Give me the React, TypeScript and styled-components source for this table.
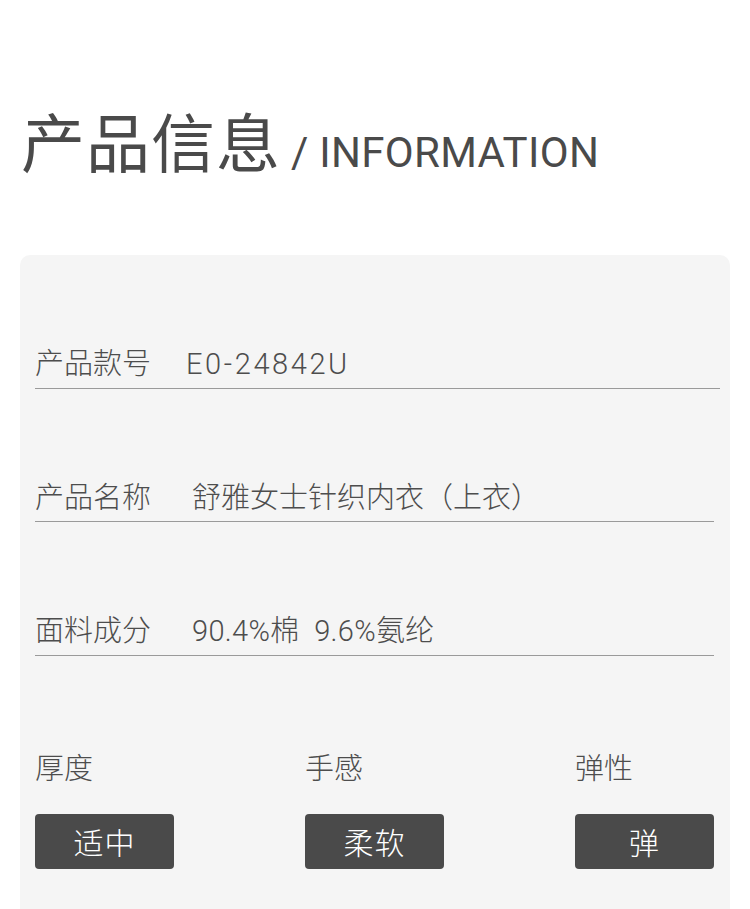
import styled, { createGlobalStyle } from "styled-components";

const GlobalStyle = createGlobalStyle`
  body {
    margin: 0;
    background: #ffffff;
    font-family: "Noto Sans CJK SC", "Noto Sans", sans-serif;
    color: #4d4d4d;
  }
`;

const Page = styled.div`
  width: 750px;
  overflow: hidden;
`;

const Header = styled.h1`
  margin: 0;
  padding: 107px 0 0 21px;
  display: flex;
  align-items: baseline;
  font-weight: 400;
  line-height: 1;
  color: #4a4a4a;
`;

const TitleCn = styled.span`
  font-size: 64px;
  letter-spacing: 1px;
`;

const TitleEn = styled.span`
  margin-left: 10px;
  font-family: Roboto, "Noto Sans", sans-serif;
  font-size: 42px;
  font-weight: 400;
  letter-spacing: 0.3px;
`;

const Card = styled.section`
  margin: 81px 20px 0;
  padding: 0 0 60px 15px;
  background: #f5f5f5;
  border-radius: 10px 10px 0 0;
`;

const Row = styled.div<{ $end: number }>`
  display: flex;
  align-items: baseline;
  margin-right: ${({ $end }) => $end}px;
  padding: 86px 0 6.5px;
  height: 40px;
  border-bottom: 1.5px solid #9a9a9a;
  font-size: 29px;
  font-weight: 300;
  line-height: 40px;
  white-space: nowrap;
`;

const Label = styled.span`
  flex: none;
  width: 118px;
`;

const Value = styled.span<{ $indent: number; $track: number }>`
  margin-left: ${({ $indent }) => $indent}px;
  font-family: Roboto, "Noto Sans CJK SC", sans-serif;
  font-size: 29px;
  font-weight: 300;
  letter-spacing: ${({ $track }) => $track}px;
  white-space: pre;
`;

const Traits = styled.div`
  display: grid;
  grid-template-columns: 270px 270px 1fr;
  padding-top: 90px;
`;

const Trait = styled.div`
  display: flex;
  flex-direction: column;
  gap: 28px;
`;

const TraitName = styled.span`
  font-size: 29px;
  font-weight: 300;
  line-height: 40px;
`;

const Tag = styled.div`
  width: 139px;
  height: 55px;
  border-radius: 4px;
  background: #4a4a4a;
  color: #ffffff;
  font-size: 30px;
  font-weight: 300;
  display: flex;
  align-items: center;
  justify-content: center;
  letter-spacing: 1px;
`;

const rows = [
  { label: "产品款号", value: "E0-24842U", indent: 33, end: 10, track: 2.6 },
  { label: "产品名称", value: "舒雅女士针织内衣（上衣）", indent: 39, end: 16, track: 0 },
  { label: "面料成分", value: "90.4%棉  9.6%氨纶", indent: 39, end: 16, track: 0.3 },
];

const traits = [
  { name: "厚度", tag: "适中" },
  { name: "手感", tag: "柔软" },
  { name: "弹性", tag: "弹" },
];

export default function App() {
  return (
    <Page>
      <GlobalStyle />
      <Header>
        <TitleCn>产品信息</TitleCn>
        <TitleEn>/ INFORMATION</TitleEn>
      </Header>
      <Card>
        {rows.map((r) => (
          <Row key={r.label} $end={r.end}>
            <Label>{r.label}</Label>
            <Value $indent={r.indent} $track={r.track}>
              {r.value}
            </Value>
          </Row>
        ))}
        <Traits>
          {traits.map((t) => (
            <Trait key={t.name}>
              <TraitName>{t.name}</TraitName>
              <Tag>{t.tag}</Tag>
            </Trait>
          ))}
        </Traits>
      </Card>
    </Page>
  );
}
